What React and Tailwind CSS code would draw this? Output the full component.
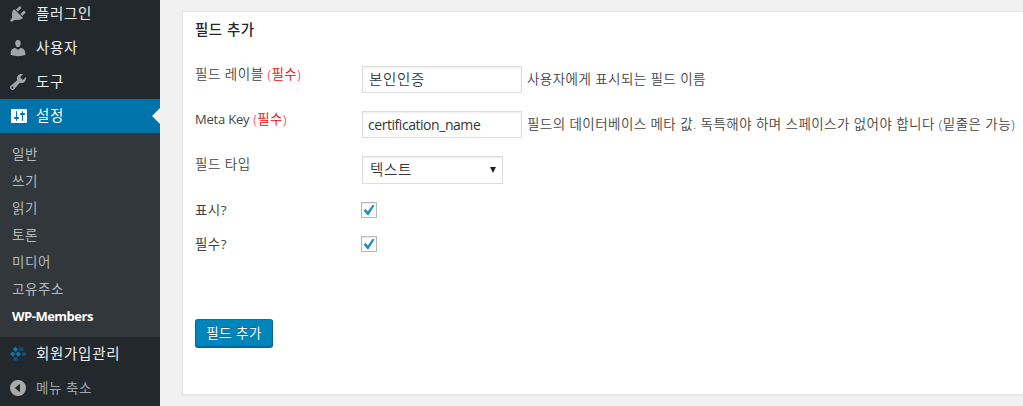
import React from 'react';

function Icon({ d, className }) {
  return (
    <svg viewBox="0 0 20 20" className={`h-5 w-5 shrink-0 ${className}`} fill="currentColor">
      <path fillRule="evenodd" d={d} />
    </svg>
  );
}

const PLUG =
  'M13.11 4.36L9.87 7.6 8 5.73l3.24-3.24c.35-.34 1.05-.2 1.56.32.52.51.66 1.21.31 1.55zm-8 1.77l.91-1.12 9.01 9.01-1.19.84c-.71.71-2.63 1.16-3.82 1.16H6.14L4.9 17.26c-.59.59-1.54.59-2.12 0-.59-.58-.59-1.53 0-2.12l1.24-1.24v-3.88c0-1.13.4-3.19 1.09-3.89zm7.26 3.97l3.24-3.24c.34-.35 1.04-.21 1.55.31.52.51.66 1.21.31 1.55l-3.24 3.25z';
const USER =
  'M10 9.25c-2.27 0-2.73-3.44-2.73-3.44C7 4.02 7.82 2 9.97 2c2.16 0 2.98 2.02 2.71 3.81 0 0-.41 3.44-2.68 3.44zm0 2.57L12.72 10c2.39 0 4.52 2.33 4.52 4.53v2.49s-3.65 1.13-7.24 1.13c-3.65 0-7.24-1.13-7.24-1.13v-2.49c0-2.25 1.94-4.48 4.47-4.48z';
const WRENCH =
  'M16.68 9.77c-1.34 1.34-3.3 1.67-4.95.99l-5.41 6.52c-.99.99-2.59.99-3.58 0s-.99-2.59 0-3.57l6.52-5.42c-.68-1.65-.35-3.61.99-4.95 1.28-1.28 3.12-1.62 4.72-1.06l-2.89 2.89 2.82 2.82 2.86-2.87c.53 1.58.18 3.39-1.08 4.65zM3.81 16.21c.4.39 1.04.39 1.43 0 .4-.4.4-1.04 0-1.43-.39-.4-1.03-.4-1.43 0-.39.39-.39 1.03 0 1.43z';
const SLIDERS =
  'M18 16V4c0-.55-.45-1-1-1H3c-.55 0-1 .45-1 1v12c0 .55.45 1 1 1h14c.55 0 1-.45 1-1zM8 11h1c.55 0 1 .45 1 1s-.45 1-1 1H8v1.5c0 .28-.22.5-.5.5s-.5-.22-.5-.5V13H6c-.55 0-1-.45-1-1s.45-1 1-1h1V5.5c0-.28.22-.5.5-.5s.5.22.5.5V11zm5-2h-1c-.55 0-1-.45-1-1s.45-1 1-1h1V5.5c0-.28.22-.5.5-.5s.5.22.5.5V7h1c.55 0 1 .45 1 1s-.45 1-1 1h-1v5.5c0 .28-.22.5-.5.5s-.5-.22-.5-.5V9z';
const COLLAPSE = 'M10 2a8 8 0 1 0 0 16a8 8 0 1 0 0-16zM12 5.8v8.4L6.8 10z';

function MembersLogo() {
  return (
    <svg viewBox="0 0 20 20" className="h-5 w-5 shrink-0">
      <g fill="#0d79a8">
        <path d="M7.5 2.7l2.7 2.6-2.7 2.6-2.7-2.6z" />
        <path d="M4.8 7.5l2.7 2.6-2.7 2.6-2.7-2.6z" />
        <path d="M10.2 7.5l2.7 2.6-2.7 2.6-2.7-2.6z" />
      </g>
      <g fill="#0d5484">
        <path d="M11.2 3.4h3.9v3.4h-3.9z" />
        <path d="M14 8.4h3.9v3.4H14z" />
        <path d="M5.6 13.3h3.9v3.4H5.6z" />
      </g>
      <path fill="#0b3358" d="M11.2 13.3h3.9v3.4h-3.9z" />
    </svg>
  );
}

function MenuItem({ icon, label, active }) {
  return (
    <div className={`relative flex h-[34px] shrink-0 items-center pl-2 ${active ? 'bg-[#0073aa] text-white' : 'text-[#eee]'}`}>
      {icon}
      <span className="mb-px ml-2 text-[14.5px] tracking-[0.7px]">{label}</span>
      {active && (
        <svg viewBox="0 0 8 16" className="absolute right-0 top-[9px] h-4 w-2" fill="#f1f1f1">
          <path d="M8 0v16L0 8z" />
        </svg>
      )}
    </div>
  );
}

const SUBMENU = ['일반', '쓰기', '읽기', '토론', '미디어', '고유주소'];

function Sidebar() {
  const gray = 'text-[#a0a5aa]';
  return (
    <nav className="-mt-[3px] flex h-[409px] w-40 shrink-0 flex-col bg-[#23282d]">
      <MenuItem icon={<Icon d={PLUG} className={gray} />} label="플러그인" />
      <MenuItem icon={<Icon d={USER} className={gray} />} label="사용자" />
      <MenuItem icon={<Icon d={WRENCH} className={gray} />} label="도구" />
      <MenuItem active icon={<Icon d={SLIDERS} className="ml-px -mr-px text-white" />} label="설정" />
      <ul className="h-[204px] shrink-0 bg-[#32373c] py-[7px] pl-3 text-[13.5px] text-[#b4b9be]">
        {SUBMENU.map((s) => (
          <li key={s} className="h-[27px] leading-[29px] tracking-[0.6px]">{s}</li>
        ))}
        <li className="h-[27px] text-[13px] font-bold leading-[29px] tracking-[-0.5px] text-white">WP-Members</li>
      </ul>
      <MenuItem icon={<MembersLogo />} label="회원가입관리" />
      <div className="flex h-[34px] items-center pl-2 text-[#a0a5aa]">
        <Icon d={COLLAPSE} className="text-[#aaaaaa]" />
        <span className="ml-2 text-[13.5px] tracking-[0.55px]">메뉴 축소</span>
      </div>
    </nav>
  );
}

function Row({ label, labelClass = 'tracking-[0.5px]', required, className, children }) {
  return (
    <div className={`flex ${className}`}>
      <div className="-mt-px w-[167px] shrink-0 whitespace-nowrap text-[13.5px] leading-[18px] tracking-[0.35px] font-[350]">
        <span className={labelClass}>{label}</span>
        {required && <span className="text-[#f00]"> (필수)</span>}
      </div>
      {children}
    </div>
  );
}

function Check() {
  return (
    <div className="-ml-px mt-px flex h-4 w-4 items-center justify-center border border-[#b4b9be] bg-white shadow-[inset_0_1px_2px_rgba(0,0,0,0.1)]">
      <svg viewBox="0 0 12 12" className="h-3 w-3 shrink-0" fill="#1e8cbe">
        <path d="M.6 6.4l2-1.5 2.3 2.5L9.4 1l2.2.3L5.7 11H4.1z" />
      </svg>
    </div>
  );
}

const FIELD = 'flex shrink-0 items-center border border-[#ddd] bg-white text-[#32373c] shadow-[inset_0_1px_2px_rgba(0,0,0,0.07)]';

export default function App() {
  return (
    <div className="flex h-[406px] w-[1023px] overflow-hidden bg-[#f1f1f1] font-['Open_Sans','Noto_Sans_CJK_KR',sans-serif]">
      <Sidebar />
      <main className="flex-1 overflow-hidden pl-[22px] pt-[11px]">
        <section className="h-[384px] w-[860px] border border-[#e5e5e5] bg-white pl-3 text-[#444] shadow-[0_1px_1px_rgba(0,0,0,0.04)]">
          <h3 className="mt-2 h-5 text-[14.5px] font-medium leading-5 tracking-[0.5px] text-[#23282d]">필드 추가</h3>
          <Row className="mt-[26px] h-[45px]" label="필드 레이블" required>
            <div className={`${FIELD} h-[27px] w-[160px] pl-[6px] text-[14.5px] tracking-[0.7px] font-[350]`}>본인인증</div>
            <span className="ml-[5px] text-[13.5px] leading-[27px] tracking-[0.43px] font-[350]">사용자에게 표시되는 필드 이름</span>
          </Row>
          <Row className="h-[45px]" label="Meta Key" labelClass="text-[13px] font-normal tracking-[-0.2px]" required>
            <div className={`${FIELD} h-[27px] w-[160px] pl-[5px] text-[14px] tracking-[-0.45px]`}>certification_name</div>
            <span className="ml-[5px] whitespace-nowrap text-[13.5px] leading-[27px] tracking-[0.43px] font-[350]">필드의 데이터베이스 메타 값. 독특해야 하며 스페이스가 없어야 합니다 (밑줄은 가능)</span>
          </Row>
          <Row className="h-[45px]" label="필드 타입">
            <div className={`${FIELD} h-[28px] w-[141px] justify-between pl-[7px] pr-[6px] text-[14.5px] tracking-[0.7px] font-[350]`}>
              텍스트
              <svg viewBox="0 0 6 6" className="h-[6px] w-[6px]" fill="#222">
                <path d="M0 0h6L3 6z" />
              </svg>
            </div>
          </Row>
          <Row className="h-[34px]" label="표시?" labelClass="font-normal leading-5 tracking-[0.4px]">
            <Check />
          </Row>
          <Row className="h-[34px]" label="필수?" labelClass="font-normal leading-5 tracking-[0.4px]">
            <Check />
          </Row>
          <button className="mt-[50px] flex h-[28px] w-[78px] items-center justify-center rounded-[3px] border border-[#006799] border-t-[#0073aa] bg-[#0085ba] text-[13.5px] tracking-[0.5px] text-white shadow-[0_1px_0_#006799] [text-shadow:0_-1px_1px_#006799]">필드 추가</button>
        </section>
      </main>
    </div>
  );
}
